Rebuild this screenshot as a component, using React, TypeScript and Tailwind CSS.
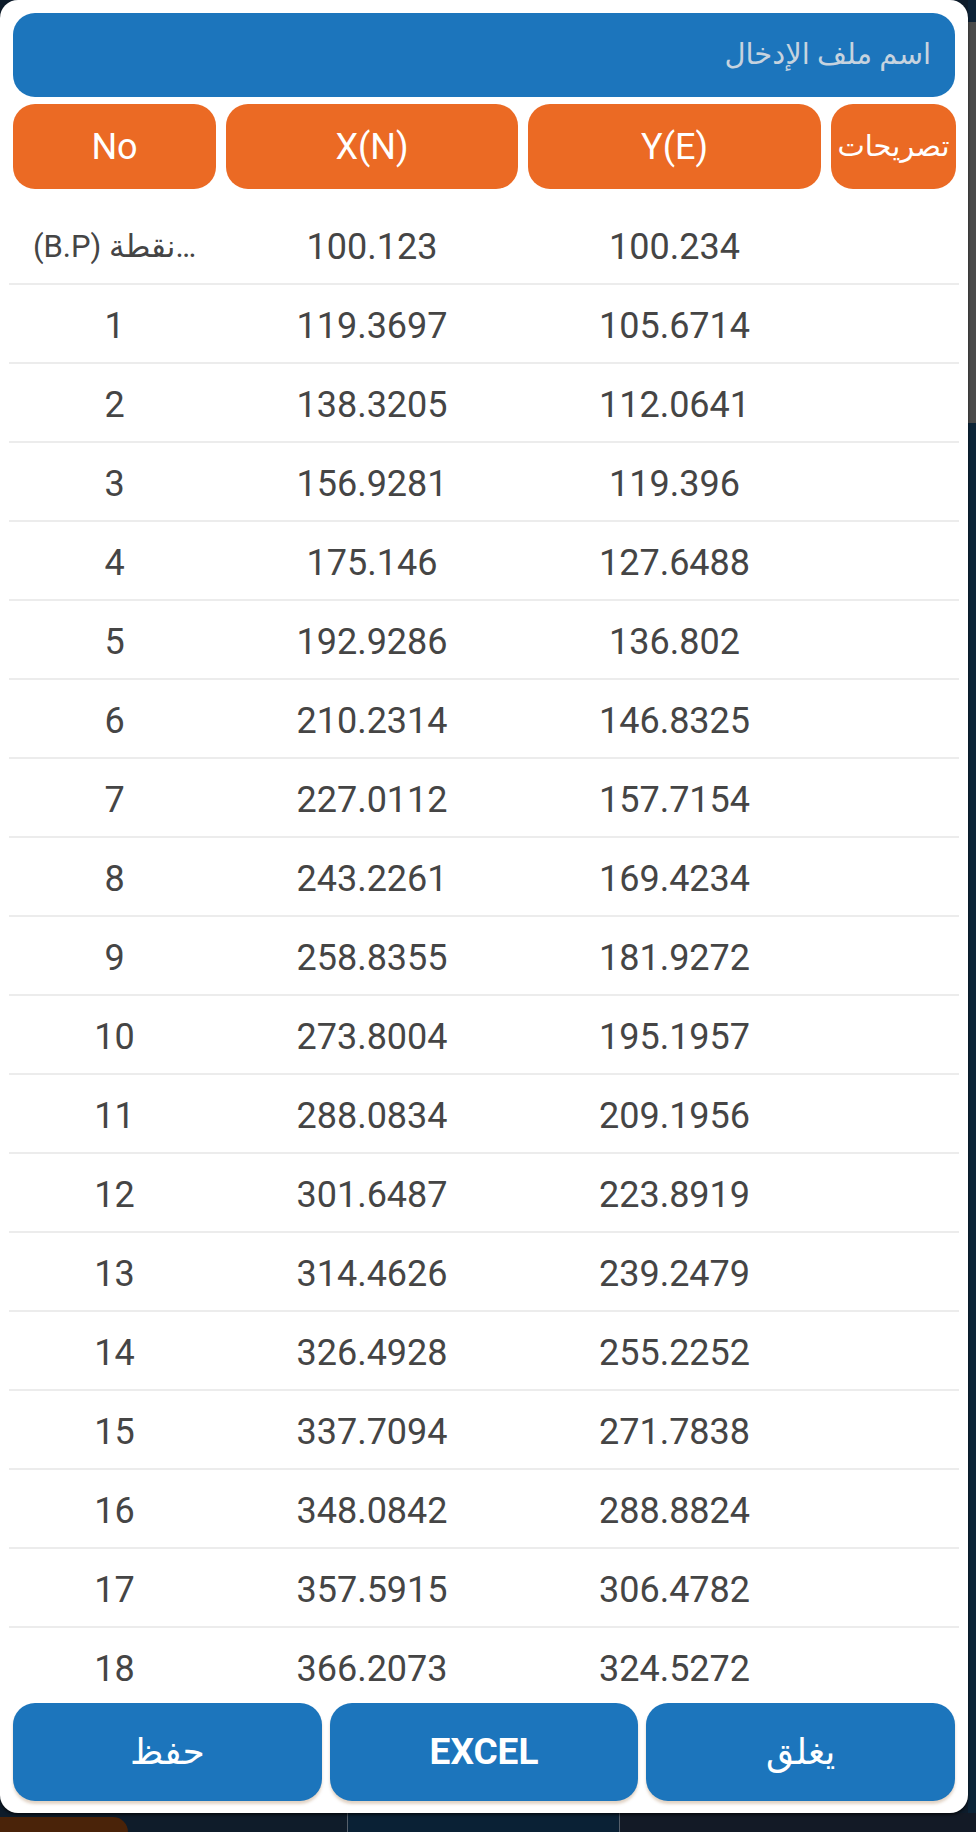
import React from "react"

const rows: [string, string, string][] = [
  ["1", "119.3697", "105.6714"],
  ["2", "138.3205", "112.0641"],
  ["3", "156.9281", "119.396"],
  ["4", "175.146", "127.6488"],
  ["5", "192.9286", "136.802"],
  ["6", "210.2314", "146.8325"],
  ["7", "227.0112", "157.7154"],
  ["8", "243.2261", "169.4234"],
  ["9", "258.8355", "181.9272"],
  ["10", "273.8004", "195.1957"],
  ["11", "288.0834", "209.1956"],
  ["12", "301.6487", "223.8919"],
  ["13", "314.4626", "239.2479"],
  ["14", "326.4928", "255.2252"],
  ["15", "337.7094", "271.7838"],
  ["16", "348.0842", "288.8824"],
  ["17", "357.5915", "306.4782"],
  ["18", "366.2073", "324.5272"],
]

const HeadCell = ({ w, small, children }: { w: string; small?: boolean; children: React.ReactNode }) => (
  <div
    className={`${w} h-full shrink-0 rounded-[22px] bg-[#eb6a24] flex items-center justify-center overflow-hidden whitespace-nowrap text-white ${
      small ? "text-[29px]" : "text-[36px]"
    }`}
  >
    {children}
  </div>
)

const Row = ({ no, x, y, first }: { no: React.ReactNode; x: string; y: string; first?: boolean }) => (
  <div className="h-[79px] shrink-0 border-b-2 border-[#ececec] flex items-center pt-[5px] px-[4px] gap-[10px] text-[#454545] text-[36px]">
    <div
      className={`w-[203px] shrink-0 text-center whitespace-nowrap overflow-hidden ${first ? "text-[31px]" : ""}`}
      dir="ltr"
    >
      {no}
    </div>
    <div className="w-[292px] shrink-0 text-center">{x}</div>
    <div className="w-[293px] shrink-0 text-center">{y}</div>
    <div className="w-[125px] shrink-0" />
  </div>
)

const FooterButton = ({ children, bold }: { children: React.ReactNode; bold?: boolean }) => (
  <button
    className={`flex-1 h-full rounded-[22px] bg-[#1c75bc] text-white flex items-center justify-center shadow-[0_3px_3px_rgba(170,130,90,0.35)] ${
      bold ? "font-bold text-[37px]" : "text-[36px]"
    }`}
  >
    {children}
  </button>
)

export default function App() {
  return (
    <div
      className="w-[976px] h-[1832px] bg-[#0e1c2b] flex flex-col overflow-hidden"
      style={{ fontFamily: 'Roboto, "DejaVu Sans", sans-serif' }}
    >
      <div className="flex h-[1813px] shrink-0">
        {/* dialog */}
        <div className="w-[968px] h-full bg-white rounded-[18px] shadow-[0_2px_3px_rgba(0,0,0,0.6)] flex flex-col px-[13px] pt-[13px] pb-[12px] z-10">
          <div
            className="h-[84px] shrink-0 rounded-[22px] bg-[#1c75bc] flex items-center px-[24px] text-[29px] text-[#c6d3df]"
            dir="rtl"
          >
            اسم ملف الإدخال
          </div>

          <div className="h-[85px] mt-[7px] shrink-0 flex gap-[10px]">
            <HeadCell w="w-[203px]">No</HeadCell>
            <HeadCell w="w-[292px]">X(N)</HeadCell>
            <HeadCell w="w-[293px]">Y(E)</HeadCell>
            <HeadCell w="w-[125px]" small>
              <span dir="rtl">تصريحات</span>
            </HeadCell>
          </div>

          <div className="flex-1 min-h-0 overflow-hidden mx-[-4px] pt-[17px] flex flex-col">
            <Row first no={"(B.P) نقطة\u2026"} x="100.123" y="100.234" />
            {rows.map(([n, x, y]) => (
              <Row key={n} no={n} x={x} y={y} />
            ))}
          </div>

          <div className="h-[98px] mt-[6px] shrink-0 flex gap-[8px]">
            <FooterButton>حفظ</FooterButton>
            <FooterButton bold>EXCEL</FooterButton>
            <FooterButton>يغلق</FooterButton>
          </div>
        </div>

        {/* strip of the screen behind, right side */}
        <div className="w-[8px] h-full flex flex-col">
          <div className="h-[22px] bg-[#0d2236]" />
          <div className="h-[401px] bg-[#4a4a4a]" />
          <div className="flex-1 bg-[#0c2437]" />
        </div>
      </div>

      {/* strip of the screen behind, bottom */}
      <div className="flex-1 flex">
        <div className="w-[128px] mt-[4px] bg-[#4a2309] rounded-tr-[16px]" />
        <div className="w-[219px] bg-[#0f1c2a]" />
        <div className="w-[1px] bg-[#56606b]" />
        <div className="w-[271px] bg-[#0a2135]" />
        <div className="w-[1px] bg-[#56606b]" />
        <div className="flex-1 bg-[#131a26]" />
      </div>
    </div>
  )
}
